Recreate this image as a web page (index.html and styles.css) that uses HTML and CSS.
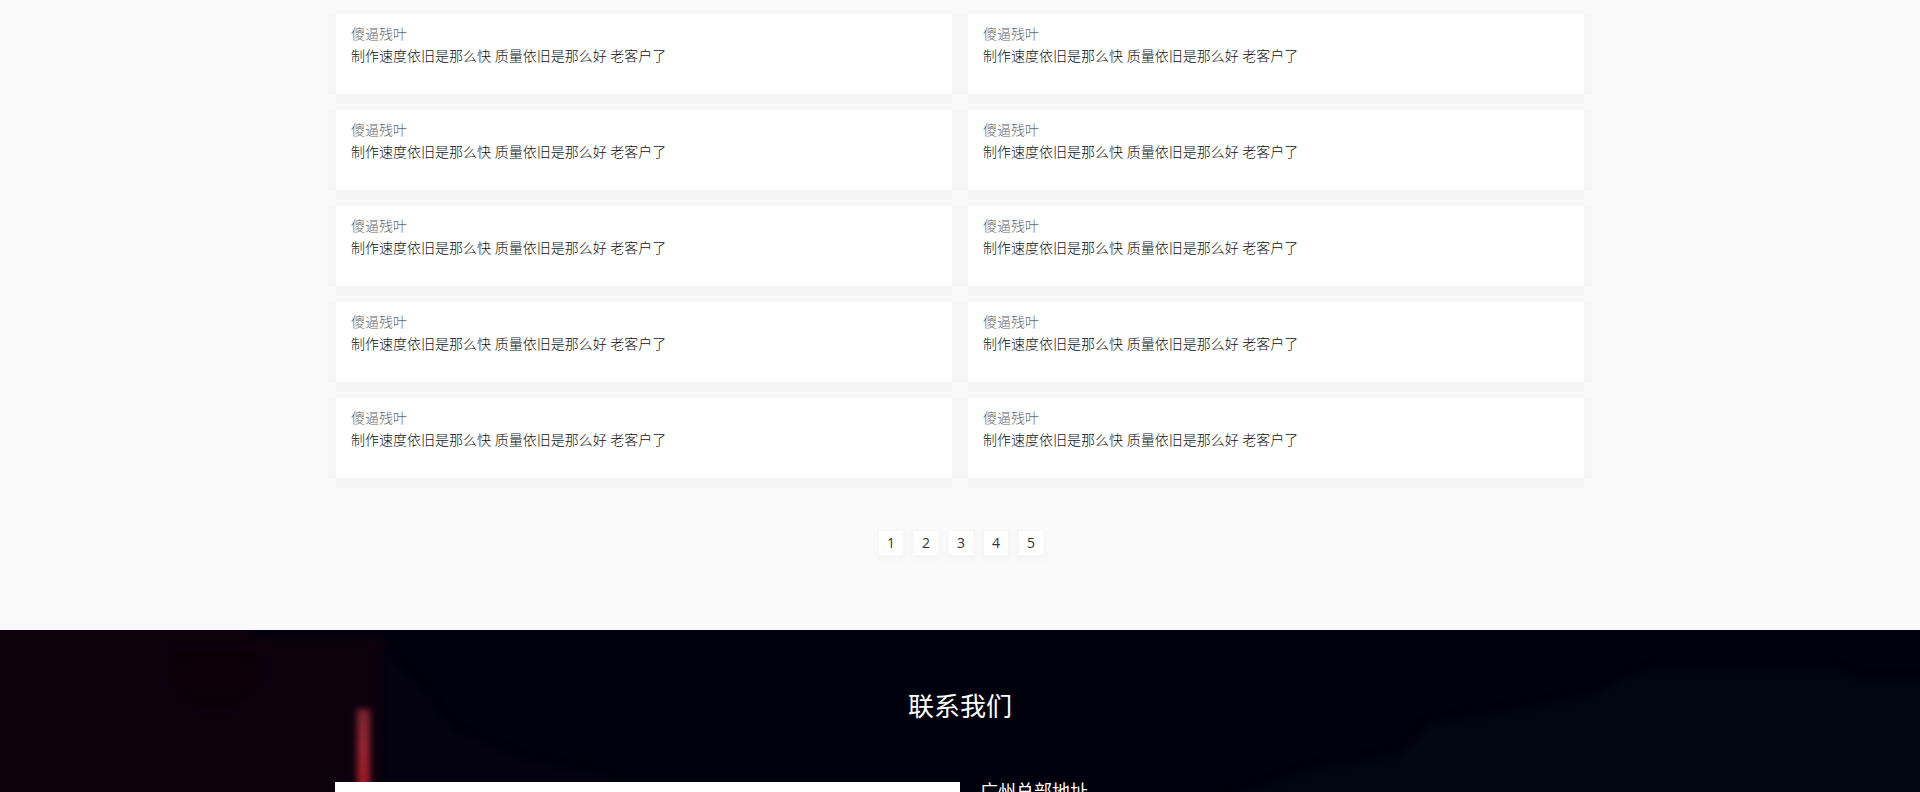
FILE: index.html
```html
<!DOCTYPE html>
<html lang="zh-CN">
<head>
<meta charset="utf-8">
<title>联系我们</title>
<link rel="stylesheet" href="styles.css">
</head>
<body>
<main class="reviews">
  <div class="review-grid">
    <article class="review"><h3 class="review-name">傻逼残叶</h3><p class="review-text">制作速度依旧是那么快 质量依旧是那么好 老客户了</p></article>
    <article class="review"><h3 class="review-name">傻逼残叶</h3><p class="review-text">制作速度依旧是那么快 质量依旧是那么好 老客户了</p></article>
    <article class="review"><h3 class="review-name">傻逼残叶</h3><p class="review-text">制作速度依旧是那么快 质量依旧是那么好 老客户了</p></article>
    <article class="review"><h3 class="review-name">傻逼残叶</h3><p class="review-text">制作速度依旧是那么快 质量依旧是那么好 老客户了</p></article>
    <article class="review"><h3 class="review-name">傻逼残叶</h3><p class="review-text">制作速度依旧是那么快 质量依旧是那么好 老客户了</p></article>
    <article class="review"><h3 class="review-name">傻逼残叶</h3><p class="review-text">制作速度依旧是那么快 质量依旧是那么好 老客户了</p></article>
    <article class="review"><h3 class="review-name">傻逼残叶</h3><p class="review-text">制作速度依旧是那么快 质量依旧是那么好 老客户了</p></article>
    <article class="review"><h3 class="review-name">傻逼残叶</h3><p class="review-text">制作速度依旧是那么快 质量依旧是那么好 老客户了</p></article>
    <article class="review"><h3 class="review-name">傻逼残叶</h3><p class="review-text">制作速度依旧是那么快 质量依旧是那么好 老客户了</p></article>
    <article class="review"><h3 class="review-name">傻逼残叶</h3><p class="review-text">制作速度依旧是那么快 质量依旧是那么好 老客户了</p></article>
  </div>
  <nav class="pages" aria-label="分页">
    <a class="page" href="#1">1</a>
    <a class="page" href="#2">2</a>
    <a class="page" href="#3">3</a>
    <a class="page" href="#4">4</a>
    <a class="page" href="#5">5</a>
  </nav>
</main>
<section class="contact">
  <svg class="backdrop" viewBox="0 0 1920 162" preserveAspectRatio="xMidYMin slice" aria-hidden="true">
    <defs>
      <filter id="soft" x="-100%" y="-20%" width="300%" height="140%" color-interpolation-filters="sRGB"><feGaussianBlur stdDeviation="3 3"/></filter>
      <filter id="haze" color-interpolation-filters="sRGB"><feGaussianBlur stdDeviation="5"/></filter>
      <linearGradient id="lamp" x1="0" y1="0" x2="0" y2="1">
        <stop offset="0" stop-color="#7a2430"/><stop offset=".45" stop-color="#962430"/><stop offset="1" stop-color="#a0131f"/>
      </linearGradient>
    </defs>
    <rect width="1920" height="162" fill="#01010d"/>
    <path filter="url(#haze)" fill="#0e010e" d="M-20-20H250V8H384V180H-20Z"/>
    <path filter="url(#haze)" fill="#0c0006" d="M170 20H260V60L235 78H190L170 55Z"/>
    <path filter="url(#haze)" fill="#04020f" d="M384 20L420 60L450 100L520 130L600 145L680 180H384Z"/>
    <path filter="url(#haze)" fill="#010610" d="M1190 180L1320 138L1400 126L1430 94L1520 80L1590 66L1620 50L1660 38H1830L1860 50H1940V180Z"/>
    <rect filter="url(#soft)" x="357" y="79" width="13" height="90" fill="url(#lamp)"/>
  </svg>
  <div class="contact-inner">
    <h2 class="contact-title">联系我们</h2>
    <div class="contact-columns">
      <div class="map"></div>
      <div class="address"><h3 class="address-title">广州总部地址</h3></div>
    </div>
  </div>
</section>
</body>
</html>
```
FILE: styles.css
```css
* {
  box-sizing: border-box;
}

body {
  display: flex;
  flex-direction: column;
  height: 100vh;
  margin: 0;
  overflow: hidden;
  background: #fafafa;
  color: #111;
  font-family: "Open Sans", "Noto Sans CJK SC", sans-serif;
  font-size: 14px;
  line-height: 22px;
}

h2,
h3,
p {
  margin: 0;
  font-weight: 300;
}

.reviews {
  flex: none;
  padding: 14px 16px 70px;
  border-bottom: 5px solid #f8f8fd;
}

.review-grid {
  display: grid;
  grid-template-columns: 1fr 1fr;
  gap: 16px;
  max-width: 1248px;
  margin: 0 auto;
}

.review {
  min-height: 80px;
  padding: 9px 15px;
  background: #fff;
  box-shadow: -8px 0 #f6f6f6, 8px 0 #f6f6f6, 0 10px #f5f5f5, 0 -4px #f6f6f6;
}

.review-name {
  color: #666;
  font-size: 14px;
}

.pages {
  display: flex;
  justify-content: center;
  gap: 11px;
  margin-top: 53px;
  padding-left: 2px;
}

.page {
  width: 24px;
  height: 24px;
  background: #fff;
  box-shadow: 0 2px 6px 2px #f5f5f5;
  color: #333;
  line-height: 24px;
  text-align: center;
  text-decoration: none;
}

.contact {
  position: relative;
  flex: 1;
  min-height: 0;
  background: #01010d;
  color: #fff;
}

.backdrop {
  position: absolute;
  inset: 0;
  width: 100%;
  height: 100%;
}

.contact-inner {
  position: relative;
  max-width: 1250px;
  margin: 0 auto;
  padding-top: 56px;
}

.contact-title {
  font-size: 26px;
  font-weight: 400;
  line-height: 40px;
  text-align: center;
}

.contact-columns {
  display: grid;
  grid-template-columns: 1fr 1fr;
  margin-top: 56px;
}

.map {
  min-height: 300px;
  background: #fff;
}

.address {
  padding-left: 20px;
}

.address-title {
  font-size: 18px;
  font-weight: 400;
  line-height: 18px;
}
```
